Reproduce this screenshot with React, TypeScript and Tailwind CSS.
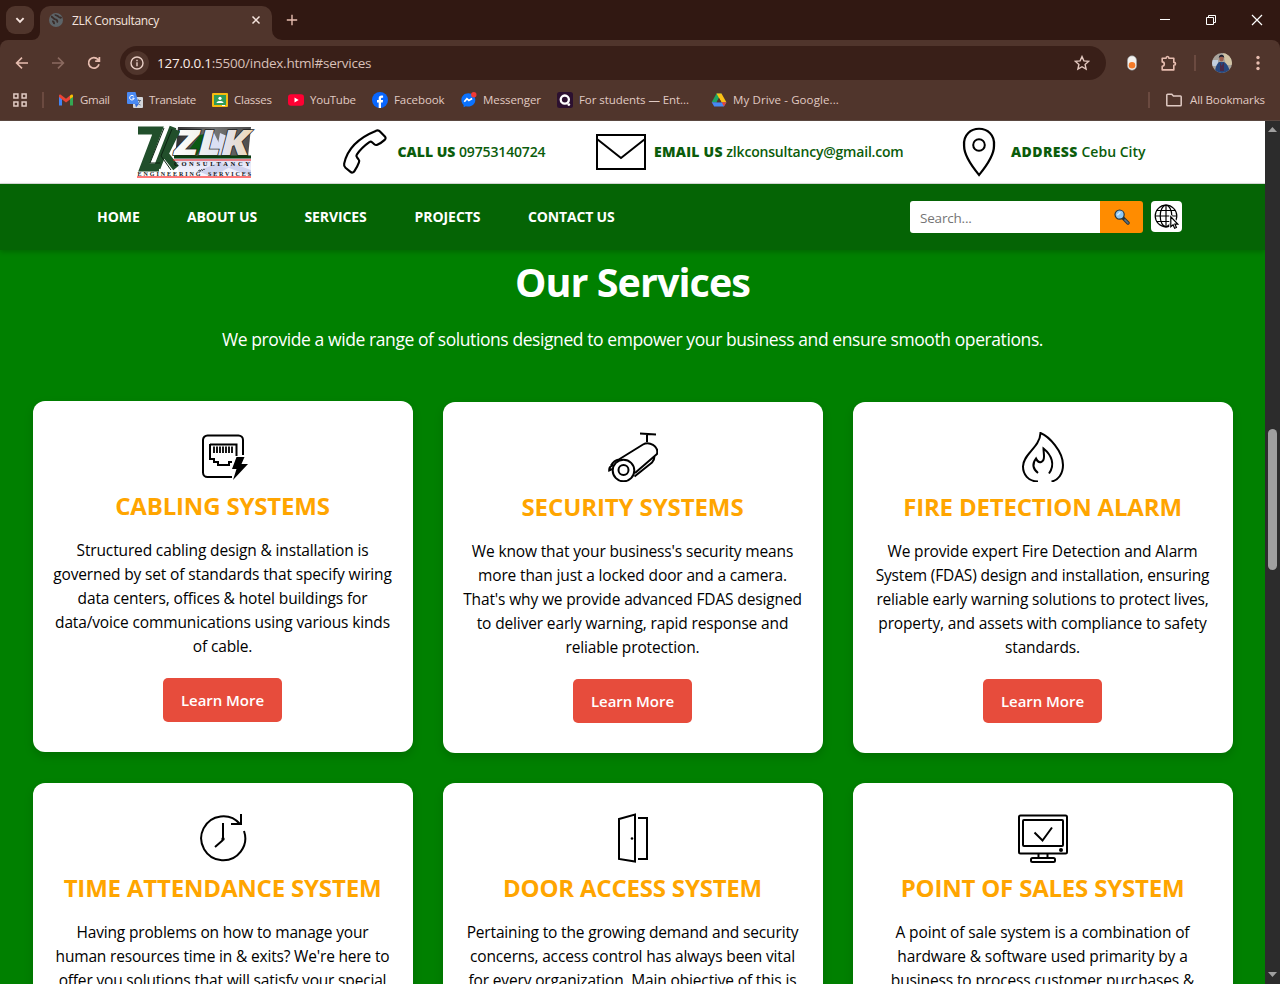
import React from "react";

type Kids = { children?: React.ReactNode };

function Stroke({ size, box, w = 1.5, className = "", children }: Kids & { size: number; box: number; w?: number; className?: string }) {
  return (
    <svg
      width={size}
      height={size}
      viewBox={`0 0 ${box} ${box}`}
      fill="none"
      stroke="currentColor"
      strokeWidth={w}
      className={`shrink-0 ${className}`}
    >
      {children}
    </svg>
  );
}

/* ---------- Browser chrome ---------- */

function TabStrip() {
  return (
    <div className="flex h-10 bg-[#311812]">
      <div className="ml-1.5 mt-1.5 flex h-7 w-7 items-center justify-center rounded-[9px] bg-[#50352c] text-[#f6e4de]">
        <Stroke size={10} box={10} w={1.9}>
          <path d="M1.4 3.2 5 6.8 8.6 3.2" />
        </Stroke>
      </div>
      <div className="flex h-full items-end">
        <svg width="8" height="8" className="ml-[-2px]" fill="#50352c">
          <path d="M8 0v8H0a8 8 0 0 0 8-8Z" />
        </svg>
        <div className="flex h-[34px] w-[232px] items-center rounded-t-[10px] bg-[#50352c] pl-[9px] pr-[11px]">
          <svg width="14" height="14" viewBox="0 0 14 14" className="mb-1.5">
            <circle cx="7" cy="7" r="7" fill="#5d6468" />
            <path d="M2 3.5c2 .2 2.200 2.600 4.300 2.900 2 .3 2.600 1.700 1.600 3.200M6 1.500c.6 1.600 2.600.8 3.400 2.200.5 1 2.200.6 3.200 1.300M3.200 8.200c1.200.3 2 1.300 1.900 2.900" stroke="#3b2d2a" strokeWidth="1.800" fill="none" />
          </svg>
          <span className="mb-1 ml-[9px] flex-1 whitespace-nowrap text-[12px] tracking-[-0.33px] text-[#f5e4de]">ZLK Consultancy</span>
          <Stroke size={10} box={10} w={1.5} className="mb-1.5 text-[#f6e4de]">
            <path d="m1.500 1.500 7 7m0-7-7 7" />
          </Stroke>
        </div>
        <svg width="10" height="10" fill="#50352c">
          <path d="M0 0v10h10A10 10 0 0 1 0 0Z" />
        </svg>
      </div>
      <Stroke size={12} box={12} w={1.4} className="ml-1 mt-[14px] text-[#e7bdb0]">
        <path d="M6 .8v10.400M.8 6h10.400" />
      </Stroke>
      <div className="ml-auto flex items-center gap-9 pr-[18px] text-white">
        <Stroke size={10} box={10} w={1}>
          <path d="M0 4.500h10" />
        </Stroke>
        <Stroke size={10} box={10} w={1}>
          <path d="M.5 2.500h7v7h-7zM2.500 2.500v-2h7v7h-2" />
        </Stroke>
        <Stroke size={12} box={12} w={1.2} className="-ml-px -mr-px">
          <path d="m1 1 10 10M11 1 1 11" />
        </Stroke>
      </div>
    </div>
  );
}

function Toolbar() {
  return (
    <div className="bg-[#311812]">
      <div className="flex h-[46px] items-center rounded-t-[8px] bg-[#50352c] text-[#e7bdb0]">
        <Stroke size={14} box={14} w={1.6} className="ml-[15px]">
          <path d="M13 7H1.800M7 1.600 1.600 7 7 12.400" />
        </Stroke>
        <Stroke size={14} box={14} w={1.6} className="ml-[22px] text-[#8b6a60]">
          <path d="M1 7h11.200M7 1.600 12.400 7 7 12.400" />
        </Stroke>
        <Stroke size={14} box={14} w={1.7} className="ml-[22px]">
          <path d="M12 8.300A5.300 5.300 0 1 1 10.900 3.400L12.300 5M12.400 1v4.200H8.200" />
        </Stroke>
        <div className="ml-[19px] flex h-[34px] w-[986px] items-center rounded-full bg-[#391f18] pl-[5px] pr-4">
          <div className="flex h-6 w-6 items-center justify-center rounded-full bg-[#50352c] text-[#e9cfc6]">
            <Stroke size={14} box={14} w={1.4}>
              <circle cx="7" cy="7" r="6" />
              <path d="M7 6.200v4M7 3.700v1.500" />
            </Stroke>
          </div>
          <span className="ml-2 flex-1 whitespace-nowrap text-[13.5px] tracking-[-0.24px] text-[#d9c0b8]">
            <span className="text-[#fbeee9]">127.0.0.1</span>:5500/index.html#services
          </span>
          <Stroke size={16} box={16} w={1.4} className="text-[#e3c8bf]">
            <path d="m8 1.600 1.900 4.300 4.700.5-3.500 3.100 1 4.600L8 11.700l-4.100 2.400 1-4.600-3.500-3.100 4.700-.5Z" />
          </Stroke>
        </div>
        <svg width="10" height="16" viewBox="0 0 10 16" className="ml-[21px]">
          <rect x=".4" y=".8" width="9.200" height="14.400" rx="4.600" fill="#f3f1ef" stroke="#8b9296" strokeWidth=".6" />
          <circle cx="5" cy="10.300" r="3.300" fill="#f47b2a" />
        </svg>
        <Stroke size={17} box={17} w={1.6} className="ml-[23px]">
          <path d="M2.200 3.200h3.900c0-2.300 2.800-2.300 2.800 0h4.900v4.200c2.300 0 2.300 2.800 0 2.800v4.700H2.200v-3.600c2.800-.2 2.800-4.200 0-4.400Z" strokeLinejoin="round" />
        </Stroke>
        <div className="ml-[17px] h-4 w-0.5 bg-[#6b4a40]" />
        <svg width="20" height="20" viewBox="0 0 20 20" className="ml-4">
          <defs>
            <clipPath id="avatar"><circle cx="10" cy="10" r="10" /></clipPath>
          </defs>
          <g clipPath="url(#avatar)">
            <path d="M0 0h20v20H0z" fill="#a8a49d" />
            <path d="M11 0h9v12h-6z" fill="#d2c3a4" />
            <path d="M0 7h6v6H0z" fill="#c3cfdf" />
            <path d="M3 20c0-6 2-9 4-11h5c2 1 5 4 6 11z" fill="#27477f" />
            <path d="m8 9 1.500 4L12 9v9H8z" fill="#4a2a48" />
            <ellipse cx="9.500" cy="5.600" rx="2.200" ry="3" fill="#9c5f4d" />
            <path d="M6.800 5c0-4.400 5.600-4.200 5.400 0-1-1.700-4-1.700-5.400 0Z" fill="#1b2030" />
          </g>
        </svg>
        <svg width="4" height="16" className="ml-6" fill="#e7bdb0">
          <circle cx="2" cy="2.500" r="1.700" />
          <circle cx="2" cy="8" r="1.700" />
          <circle cx="2" cy="13.500" r="1.700" />
        </svg>
      </div>
    </div>
  );
}

const bookmarks = [
  {
    label: "Gmail",
    box: "w-[69px] tracking-[-0.3px]",
    icon: (
      <>
        <path d="M1 3.500V13.500H4V7z" fill="#4285f4" />
        <path d="M15 3.500V13.500H12V7z" fill="#34a853" />
        <path d="M12 7V3.600l1.200-.8c1-.6 1.800 0 1.800 1.200v1z" fill="#fbbc04" />
        <path d="M1 5V4c0-1.200.8-1.800 1.800-1.200L8 6.700l4-3.100v3.900L8 10.400 1 5z" fill="#ea4335" />
      </>
    ),
  },
  {
    label: "Translate",
    box: "w-[85px] tracking-[-0.31px]",
    icon: (
      <>
        <rect x="6" y="5" width="10" height="11" rx="1" fill="#d4d6da" />
        <path d="M9 8.500h5M11.500 7.500v1M13 8.500c-.5 2-2 3.500-3.500 4.500M10 9.500c.8 1.800 2 3 3.500 3.500" stroke="#5c6b80" fill="none" />
        <path d="M1 0h7.500l3.300 12H1a1 1 0 0 1-1-1V1a1 1 0 0 1 1-1Z" fill="#4a89f3" />
        <path d="M6.800 4.300a2.300 2.300 0 1 0 .4 1.900H5.300" stroke="#fff" fill="none" />
        <path d="m8 12h3.800L9 15.500z" fill="#3367d6" />
      </>
    ),
  },
  {
    label: "Classes",
    box: "w-[76px] tracking-[-0.25px]",
    icon: (
      <>
        <rect y="1" width="16" height="14" rx="1" fill="#f6bb10" />
        <rect x="2" y="3" width="12" height="10" fill="#2f9c59" />
        <circle cx="8" cy="6.300" r="1.600" fill="#fff" />
        <path d="M4.500 11c.4-2.600 6.600-2.600 7 0z" fill="#fff" />
        <path d="M10 13h3v1h-3z" fill="#fff" />
      </>
    ),
  },
  {
    label: "YouTube",
    box: "w-[84px] tracking-[-0.22px]",
    icon: (
      <>
        <rect y="2.300" width="16" height="11.400" rx="3" fill="#ff0033" />
        <path d="m6.500 5.600 4.200 2.400-4.200 2.400z" fill="#fff" />
      </>
    ),
  },
  {
    label: "Facebook",
    box: "w-[89px] tracking-[-0.08px]",
    icon: (
      <>
        <circle cx="8" cy="8" r="8" fill="#0866ff" />
        <path d="M6.700 15.900v-5.500H5V8h1.700V6.600c0-2.300 1.300-3.400 4.400-2.900v2c-1.500-.2-2.100.1-2.100 1.200V8h2.100l-.4 2.400H9v5.500z" fill="#fff" />
      </>
    ),
  },
  {
    label: "Messenger",
    box: "w-[96px] tracking-[-0.08px]",
    icon: (
      <>
        <path d="M7.300 1.300C3.300 1.300.4 4.200.4 8c0 2 .8 3.800 2.200 5v2.300l2.200-1.100c4.800 1.400 9.500-1.500 9.500-6.200 0-3.800-3-6.700-7-6.700Z" fill="#0a72ff" />
        <path d="m3.300 9.700 2.600-3 2 1.800 3.200-2" stroke="#fff" strokeWidth="1.700" fill="none" />
        <circle cx="12.800" cy="2.800" r="2.700" fill="#f23a35" />
      </>
    ),
  },
  {
    label: "For students — Ent...",
    box: "w-[154px] tracking-[-0.07px]",
    icon: (
      <>
        <rect width="16" height="16" rx="2.500" fill="#2c1030" />
        <circle cx="7.800" cy="7.600" r="4.100" stroke="#fff" strokeWidth="2.300" fill="none" />
        <circle cx="11.800" cy="12.600" r="1.400" fill="#fff" />
      </>
    ),
  },
  {
    label: "My Drive - Google...",
    box: "w-[140px] tracking-[0.11px]",
    icon: (
      <>
        <path d="M5.500 1.500h5L5.600 10.300H.7z" fill="#1fa463" />
        <path d="M5.500 1.500h5l4.900 8.800h-5z" fill="#fbc116" />
        <path d="M3.200 14.500.7 10.300h14.700l-2.500 4.200z" fill="#4688f4" />
        <path d="M10.700 10.300h4.700l-2.500 4.200z" fill="#ea4335" />
        <path d="M8 6 5.600 10.300h4.900z" fill="#50352c" />
      </>
    ),
  },
];

function BookmarkBar() {
  return (
    <div className="flex h-[35px] items-center border-b border-[#5a4740] bg-[#50352c] pb-[7px] text-[11.5px] leading-4 text-[#e0cac3]">
      <Stroke size={14} box={14} w={1.5} className="ml-[13px] text-[#e0cac3]">
        <path d="M.9.9h4v4h-4zM9.100.9h4v4h-4zM.9 9.100h4v4h-4zM9.100 9.100h4v4h-4z" />
      </Stroke>
      <div className="ml-[15px] h-4 w-0.5 bg-[#6b4a40]" />
      <div className="ml-[14px] flex">
        {bookmarks.map((b) => (
          <div key={b.label} className={`flex items-center gap-1.5 whitespace-nowrap ${b.box}`}>
            <svg width="16" height="16" viewBox="0 0 16 16" className="shrink-0">{b.icon}</svg>
            <span>{b.label}</span>
          </div>
        ))}
      </div>
      <div className="ml-auto h-4 w-0.5 bg-[#6b4a40]" />
      <Stroke size={16} box={16} w={1.5} className="ml-4 text-[#e0cac3]">
        <path d="M.8 3a.8.8 0 0 1 .8-.8h4.200l1.600 1.800h7a.8.8 0 0 1 .8.800v8.200a.8.8 0 0 1-.8.800H1.600a.8.8 0 0 1-.8-.8Z" />
      </Stroke>
      <span className="ml-2 mr-[15px] w-[75px] whitespace-nowrap tracking-[-0.13px]">All Bookmarks</span>
    </div>
  );
}

/* ---------- Site header ---------- */

function Logo() {
  return (
    <svg width="116" height="54" viewBox="0 0 116 54" className="ml-[136px] shrink-0 overflow-visible">
      <defs>
        <linearGradient id="sky" x1="0" y1="0" x2="0" y2="1">
          <stop offset="0" stopColor="#d9dcf2" />
          <stop offset="1" stopColor="#f7f7ff" />
        </linearGradient>
        <linearGradient id="steel" x1="0" y1="0" x2="1" y2="0">
          <stop offset="0" stopColor="#2f2f2f" />
          <stop offset=".5" stopColor="#777" />
          <stop offset="1" stopColor="#4c4c4c" />
        </linearGradient>
        <linearGradient id="face" x1="0" y1="0" x2="1" y2="0">
          <stop offset="0" stopColor="#ffffff" />
          <stop offset=".3" stopColor="#f3f3ee" />
          <stop offset=".6" stopColor="#dfe2f4" />
          <stop offset="1" stopColor="#f0d9b0" />
        </linearGradient>
      </defs>
      <path d="M38 30h77v21H44z" fill="url(#sky)" />
      <path d="M62 46 84 37l10 5-18 10zM96 38l19 7v6l-22-8z" fill="#cfd3ee" />
      <path d="M42 2h73l-3 30H39z" fill="url(#steel)" />
      <path d="M70 18 76 4l6 12 2 14H62zM84 8l7 3 2 19H80z" fill="#dadff3" />
      <path d="M64 10 49 30h12L73 8zM101 14l11 16h-10z" fill="#0b5a12" />
      <text x="39" y="30" fontSize="35" fontWeight="800" fontStyle="italic" textLength="75" lengthAdjust="spacingAndGlyphs" fill="url(#face)" stroke="#1d1d1d" strokeWidth="1.300" paintOrder="stroke">ZLK</text>
      <g fill="none" stroke="#214f2b" strokeLinejoin="miter">
        <path d="M2 5.500h20L8 42.500h15" strokeWidth="8" />
        <path d="M37 2 21 43M41 5 29 29 40 43" strokeWidth="7" />
      </g>
      <path d="M28 3 14 38h10M36 4 25 31l10 14" fill="none" stroke="#0c2412" strokeWidth="1" />
      <path d="M38 32h77" stroke="#0a3d0d" strokeWidth="3" />
      <path d="M37 35h78" stroke="#f01818" strokeWidth="1.200" />
      <text x="38" y="40.600" fontSize="6.500" fontWeight="700" textLength="76" fill="#0b0b0b" className="font-['Liberation_Serif',serif]">CONSULTANCY</text>
      <path d="M62 46.500c1-2 2-2 2 0 1-2 2-2.500 2.500-1 1.500-2 2-1.500 2-.6" stroke="#222" strokeWidth=".9" fill="none" />
      <text x="1.500" y="51" fontSize="6" fontWeight="700" textLength="63" fill="#1b1b1b" className="font-['Liberation_Serif',serif]">ENGINEERING</text>
      <text x="72" y="51" fontSize="6" fontWeight="700" textLength="43" fill="#1b1b1b" className="font-['Liberation_Serif',serif]">SERVICES</text>
      <path d="M1 52h114" stroke="#f77" strokeWidth="1.800" />
    </svg>
  );
}

function ContactBar() {
  return (
    <div className="flex h-[63px] items-center whitespace-nowrap border-b border-[#d8dcd8] bg-white text-[14px] font-semibold text-[#0b5c0b]">
      <Logo />
      <Stroke size={50} box={50} w={2} className="ml-[88px] text-black">
        <path d="M37.500 4.700c1.500-1 3-.7 4.200.7l4.300 4.500c1 1.100.8 2.300-.2 3.200-2 1.900-4.300 3.400-6.800 4.600-1 .5-2 .2-2.800-.5l-2.100-1.900c-.8-.7-1.600-.7-2.500 0-4.700 3.400-8.600 7.200-11.600 11.700-.6.900-.5 1.700.2 2.500l1.400 2c.8.900.9 1.800.4 2.800-1 2.800-2.400 5.500-4.200 8.300-1 1.500-2.400 1.800-3.600.7l-4.700-3.900c-1.200-1-1.500-2.300-1.200-3.900C11 22.500 21 11.500 37.500 4.700Z" strokeLinejoin="round" transform="translate(-4.800 -1) scale(1.080 1.060)" />
      </Stroke>
      <div className="mb-0.5 ml-[7.500px] w-[198.500px]">
        <b className="font-extrabold">CALL US</b> <span className="tracking-[-0.15px]">09753140724</span>
      </div>
      <svg width="50" height="36" fill="none" stroke="#000" strokeWidth="2" className="shrink-0">
        <path d="M1 1h48v34H1zM1 5l24 19L49 5" />
      </svg>
      <div className="mb-0.5 ml-2 w-[308px]">
        <b className="font-extrabold tracking-[0.25px]">EMAIL US</b> <span className="tracking-[-0.2px]">zlkconsultancy@gmail.com</span>
      </div>
      <svg width="34" height="50" fill="none" stroke="#000" strokeWidth="2" className="shrink-0">
        <path d="M17 48.500C11 40 4 29 4 19 2 -4.500 32-4.500 30 19c0 10-7 21-13 29.500Z" transform="translate(-2.500 .5) scale(1.150 .98)" />
        <circle cx="17" cy="18" r="5.800" />
      </svg>
      <div className="mb-0.5 ml-[15px]">
        <b className="font-extrabold tracking-[0.4px]">ADDRESS</b> <span>Cebu City</span>
      </div>
    </div>
  );
}

function SiteNav() {
  return (
    <div className="relative flex h-[66px] items-center whitespace-nowrap bg-[#056405] text-[14px] font-bold text-white shadow-[0_2px_5px_rgba(0,0,0,0.2)]">
      <nav className="mb-0.5 ml-[97px] flex">
        <a className="w-[90px]">HOME</a>
        <a className="w-[117.500px] tracking-[-0.1px]">ABOUT US</a>
        <a className="w-[110px] tracking-[-0.12px]">SERVICES</a>
        <a className="w-[113.500px] tracking-[-0.05px]">PROJECTS</a>
        <a className="tracking-[-0.16px]">CONTACT US</a>
      </nav>
      <div className="ml-auto mr-2 flex h-8 w-[233px] overflow-hidden rounded-[3px]">
        <div className="flex w-[190px] items-center bg-white pl-2.5 pt-0.5 text-[13.500px] font-normal tracking-[-0.2px] text-[#757575]">Search...</div>
        <div className="flex w-[43px] items-center justify-center bg-[#ff8c00]">
          <svg width="16" height="16" viewBox="0 0 16 16">
            <path d="m8.800 8.800 5.200 5.200" stroke="#26323a" strokeWidth="3.400" strokeLinecap="round" />
            <path d="m11 11 3 3" stroke="#5d7380" strokeWidth="1.700" strokeLinecap="round" />
            <circle cx="5.600" cy="5.600" r="4.600" fill="#8fc7f3" stroke="#26323a" strokeWidth="1.200" />
            <path d="m3.300 6.200 3-3" stroke="#d5ecff" strokeWidth="1.600" />
          </svg>
        </div>
      </div>
      <div className="mb-px mr-[83px] flex h-[31px] w-[31px] items-center justify-center rounded bg-white">
        <svg width="25" height="25" viewBox="0 0 25 25" fill="none" stroke="#000" strokeWidth="1.200">
          <circle cx="12" cy="12" r="10.800" />
          <ellipse cx="12" cy="12" rx="5.800" ry="10.800" />
          <path d="M12 1v22M1 12h22M2.700 6.500h18.600M2.700 17.500h18.600" />
          <path d="M16.800 12.800v10l2.300-2 1.500 3.400 1.800-.8-1.500-3.300h2.800z" fill="#fff" stroke="#fff" strokeWidth="3" />
          <path d="M16.800 12.800v10l2.300-2 1.500 3.400 1.800-.8-1.500-3.300h2.800z" fill="#fff" />
        </svg>
      </div>
    </div>
  );
}

/* ---------- Services ---------- */

const services = [
  {
    title: "CABLING SYSTEMS",
    titleClass: "tracking-[-0.18px]",
    textClass: "tracking-[-0.14px]",
    lift: "-translate-y-px",
    lines: [
      "Structured cabling design & installation is",
      "governed by set of standards that specify wiring",
      "data centers, offices & hotel buildings for",
      "data/voice communications using various kinds",
      "of cable.",
    ],
    icon: (
      <>
        <path d="M34 46H9.500A4.500 4.500 0 0 1 5 41.500V9a4.500 4.500 0 0 1 4.500-4.500h31A4.500 4.500 0 0 1 45 9v15" />
        <path d="M12 13.500h26.500V25M12 13v15h4v3h4v3h11v-3h3" />
        <path d="M16 15.500V22M19 15.500V22M22 15.500V22M25 15.500V22M28 15.500V22M31 15.500V22M34 15.500V22" strokeWidth="1.800" />
        <path d="M38.500 26h8l-3 7H50L35 49l3.500-11H34z" fill="#000" stroke="none" />
      </>
    ),
  },
  {
    title: "SECURITY SYSTEMS",
    titleClass: "tracking-[-0.1px]",
    textClass: "tracking-[-0.14px]",
    lift: "",
    lines: [
      "We know that your business's security means",
      "more than just a locked door and a camera.",
      "That's why we provide advanced FDAS designed",
      "to deliver early warning, rapid response and",
      "reliable protection.",
    ],
    icon: (
      <>
        <circle cx="15.500" cy="38.500" r="10.800" />
        <circle cx="15.500" cy="38" r="5" />
        <path d="M10 28 35 12.500C41 9 51 14 49 22L27 41M5.500 33C2 34 1 36 1.200 38.500L4 37M3 33.500C5 30 8 28 11 27.500M26.500 44.500 44 30.500c1.500-1.500 2.500-4 2.500-6.500M39 10V2M32 1.500l16 1" />
      </>
    ),
  },
  {
    title: "FIRE DETECTION ALARM",
    titleClass: "tracking-[-0.18px]",
    textClass: "tracking-[-0.155px]",
    lift: "",
    lines: [
      "We provide expert Fire Detection and Alarm",
      "System (FDAS) design and installation, ensuring",
      "reliable early warning solutions to protect lives,",
      "property, and assets with compliance to safety",
      "standards.",
    ],
    icon: (
      <>
        <path d="M20 49.500C10 49.500 5 42 5 34.500c0-12.500 17-19 17.500-33.500C31 4.500 45 19 45 33c0 9-5 15.500-11.500 16.500" />
        <path d="M20 41c-6-5-5.500-10-2-14.500 3 6.500 8 3.500 8-2 0-3-.5-5.500-.5-8 8 6.500 12 16 5.500 25" />
      </>
    ),
  },
  {
    title: "TIME ATTENDANCE SYSTEM",
    titleClass: "tracking-[-0.18px]",
    textClass: "tracking-[-0.175px]",
    lift: "",
    lines: ["Having problems on how to manage your", "human resources time in & exits? We're here to", "offer you solutions that will satisfy your special"],
    icon: (
      <>
        <path d="M42 11A22 22 0 1 0 46 18M43 1v10H33M25 10v17M25 27l-8 7" />
        <circle cx="25" cy="26" r="1.700" fill="#000" stroke="none" />
      </>
    ),
  },
  {
    title: "DOOR ACCESS SYSTEM",
    titleClass: "tracking-[-0.2px]",
    textClass: "tracking-[-0.155px]",
    lift: "",
    lines: ["Pertaining to the growing demand and security", "concerns, access control has always been vital", "for every organization. Main objective of this is"],
    icon: (
      <>
        <path d="M11 6 27 1.500v47L11 46zM30 5h9v41h-9" />
        <circle cx="24" cy="25.500" r="1.300" fill="#000" stroke="none" />
      </>
    ),
  },
  {
    title: "POINT OF SALES SYSTEM",
    titleClass: "tracking-[-0.2px]",
    textClass: "tracking-[-0.13px]",
    lift: "",
    lines: ["A point of sale system is a combination of", "hardware & software used primarity by a", "business to process customer purchases &"],
    icon: (
      <>
        <rect x="1" y="2.500" width="48" height="38" rx="1.500" />
        <rect x="5" y="7" width="40" height="26" rx="1" />
        <path d="m16.500 19.500 8 8L34 14.500M20.500 41v4M29.500 41v4" />
        <rect x="13" y="45" width="24" height="4" rx="1.500" />
        <circle cx="43" cy="37" r="2" fill="#000" stroke="none" />
      </>
    ),
  },
];

function Services() {
  return (
    <section className="flex flex-col items-center text-center">
      <h2 className="mt-1 h-[60px] text-[39.500px] font-bold leading-[57px] tracking-[-0.95px] text-white">Our Services</h2>
      <p className="mt-[11px] whitespace-nowrap text-[17.500px] leading-7 tracking-[-0.415px] text-white">
        We provide a wide range of solutions designed to empower your business and ensure smooth operations.
      </p>
      <div className="mt-[49px] grid grid-cols-[380px_380px_380px] grid-rows-[351px_351px] gap-[30px]">
        {services.map((s) => (
          <article key={s.title} className={`flex flex-col items-center rounded-xl bg-white pt-[30px] text-black shadow-[0_4px_10px_rgba(0,0,0,0.15)] ${s.lift}`}>
            <Stroke size={50} box={50} w={2} className="text-black">
              {s.icon}
            </Stroke>
            <h3 className={`mt-[9px] whitespace-nowrap text-[24px] font-bold leading-8 text-[#ffa500] ${s.titleClass}`}>{s.title}</h3>
            <p className={`mt-4 whitespace-nowrap text-[15.500px] leading-6 ${s.textClass}`}>
              {s.lines.map((l) => (
                <span key={l} className="block">{l}</span>
              ))}
            </p>
            <a className="mt-5 flex h-11 w-[119px] items-center justify-center rounded-[5px] bg-[#e74c3c] pt-px text-[15px] font-semibold tracking-[-0.05px] text-white">Learn More</a>
          </article>
        ))}
      </div>
    </section>
  );
}

function Scrollbar() {
  return (
    <div className="flex w-[15px] flex-col items-center bg-[#2c2c2c]">
      <svg width="9" height="5" className="mt-1.5 shrink-0" fill="#9f9f9f"><path d="M0 5 4.500 0 9 5z" /></svg>
      <div className="mt-[297px] h-[141px] w-[9px] shrink-0 rounded-full bg-[#9f9f9f]" />
      <svg width="9" height="5" className="mb-[7px] mt-auto shrink-0" fill="#9f9f9f"><path d="m0 0 4.500 5L9 0z" /></svg>
    </div>
  );
}

export default function App() {
  return (
    <div className="flex h-[984px] w-[1280px] flex-col overflow-hidden font-['Open_Sans',sans-serif]">
      <TabStrip />
      <Toolbar />
      <BookmarkBar />
      <div className="flex min-h-0 flex-1">
        <main className="min-w-0 flex-1 overflow-hidden bg-[#008000]">
          <ContactBar />
          <SiteNav />
          <Services />
        </main>
        <Scrollbar />
      </div>
    </div>
  );
}
